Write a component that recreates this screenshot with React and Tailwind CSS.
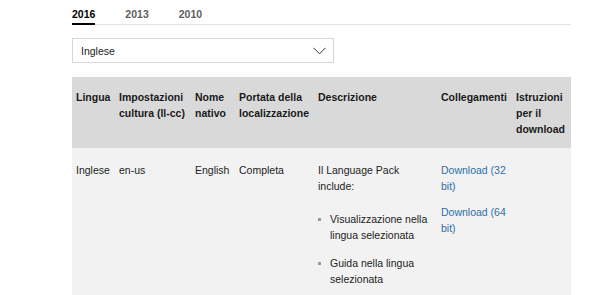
const tabs = ["2016", "2013", "2010"];

const headers = [
  "Lingua",
  "Impostazioni cultura (ll-cc)",
  "Nome nativo",
  "Portata della localizzazione",
  "Descrizione",
  "Collegamenti",
  "Istruzioni per il download",
];

const colWidths = ["w-[43px]", "w-[76px]", "w-[44px]", "w-[79px]", "w-[123px]", "w-[75px]", "w-[59px]"];

const Chevron = () => (
  <svg width="13" height="8" viewBox="0 0 13 8" fill="none">
    <polyline points="0.5,0.8 6.5,6.8 12.5,0.8" stroke="#333" strokeWidth="1" />
  </svg>
);

const App = () => {
  return (
    <div
      className="min-h-screen bg-white pl-[72px] text-[10.5px] leading-[16px] text-[#222]"
      style={{ fontFamily: '"Liberation Sans", Arial, sans-serif' }}
    >
      <div className="flex w-[499px] gap-[30px] border-b border-[#e2e2e2]">
        {tabs.map((t, i) => (
          <div
            key={t}
            className={
              i === 0
                ? "pt-[6px] border-b-2 border-black font-bold text-black -mb-px"
                : "pt-[6px] pb-[2px] font-bold text-[#5e5e5e]"
            }
          >
            {t}
          </div>
        ))}
      </div>

      <div className="mt-[13px] flex h-[25px] w-[262px] items-center justify-between border border-[#d6d6d6] pl-[8px] pr-[7px]">
        <span>Inglese</span>
        <Chevron />
      </div>

      <table className="mt-[14px] w-[499px] table-fixed border-collapse">
        <colgroup>
          {colWidths.map((w, i) => (
            <col key={i} className={w} />
          ))}
        </colgroup>
        <thead>
          <tr className="bg-[#d9d9d9]">
            {headers.map((h) => (
              <th
                key={h}
                className="pl-[4px] pr-[2px] pt-[12px] pb-[11px] text-left align-top font-bold text-[#1a1a1a]"
              >
                {h}
              </th>
            ))}
          </tr>
        </thead>
        <tbody>
          <tr className="bg-[#f2f2f2] align-top">
            <td className="pl-[4px] pr-[2px] pt-[14px] pb-[16px]">Inglese</td>
            <td className="pl-[4px] pr-[2px] pt-[14px]">en-us</td>
            <td className="pl-[4px] pr-[2px] pt-[14px]">English</td>
            <td className="pl-[4px] pr-[2px] pt-[14px]">Completa</td>
            <td className="pl-[4px] pr-[2px] pt-[14px] pb-[16px]">
              <p>Il Language Pack include:</p>
              <ul className="mt-[17px] flex flex-col gap-[12px]">
                <li className="relative pl-[12px]">
                  <span className="absolute left-0 top-[7px] h-[3px] w-[3px] bg-[#9a9a9a]" />
                  Visualizzazione nella lingua selezionata
                </li>
                <li className="relative pl-[12px]">
                  <span className="absolute left-0 top-[7px] h-[3px] w-[3px] bg-[#9a9a9a]" />
                  Guida nella lingua selezionata
                </li>
              </ul>
            </td>
            <td className="pl-[4px] pr-[2px] pt-[14px]">
              <div className="flex flex-col gap-[10px] text-[#2f6ea8]">
                <a href="#">Download (32 bit)</a>
                <a href="#">Download (64 bit)</a>
              </div>
            </td>
            <td className="pl-[4px] pr-[2px] pt-[14px]"></td>
          </tr>
        </tbody>
      </table>
    </div>
  );
};

export default App;
